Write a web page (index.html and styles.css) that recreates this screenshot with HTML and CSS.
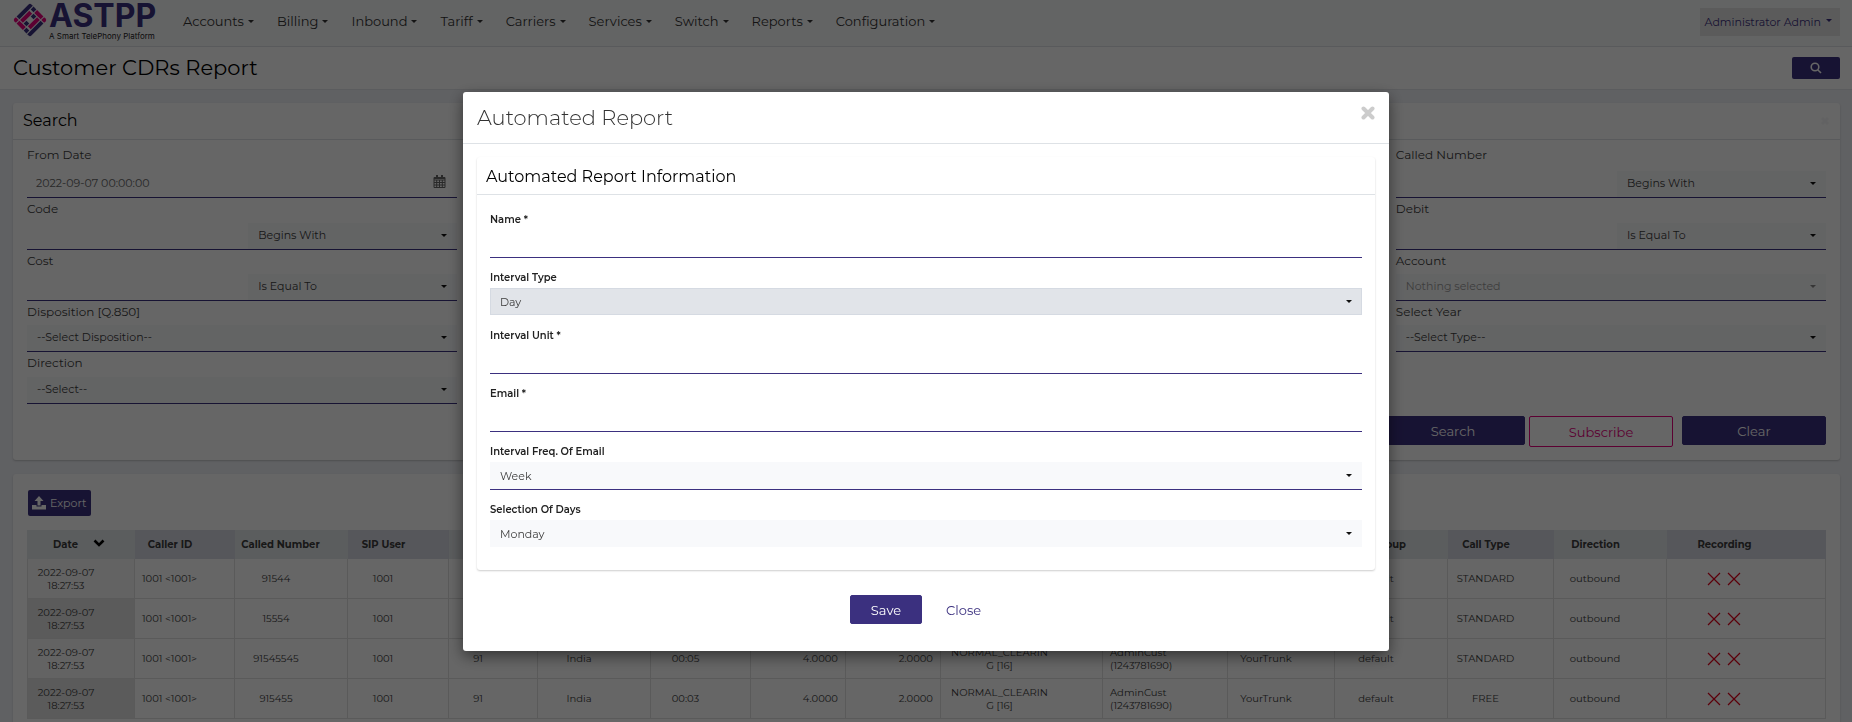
FILE: index.html
```html
<!DOCTYPE html>
<html lang="en">
<head>
<meta charset="utf-8">
<meta name="viewport" content="width=device-width, initial-scale=1">
<title>Customer CDRs Report</title>
<link rel="stylesheet" href="styles.css">
</head>
<body>
<div class="page">
  <header class="navbar">
    <a class="brand" href="#" aria-label="ASTPP">
      <svg class="brand-mark" viewBox="-17 -17 34 34" aria-hidden="true">
        <g transform="rotate(45)">
          <path class="navy" d="M-12-10a2 2 0 0 1 2-2h2v19h-4zM12 10a2 2 0 0 1-2 2h-2v-19h4z"/>
          <path class="pink" d="M-7-6h4v13h-4zM7 6h-4v-13h4z"/>
          <path class="navy" d="M-7-12h4v4h-4zM7 12h-4v-4h4z"/>
          <path class="pink" d="M-2-12h9v4h-9zM2 12h-9v-4h9z"/>
          <path class="pink" d="M-12 8h4v4h-2a2 2 0 0 1-2-2z"/>
          <path class="pink" d="M12-8h-4v-4h2a2 2 0 0 1 2 2z"/>
          <path class="navy" d="M-2-7h4v4h-4zM2 7h-4v-4h4z"/>
        </g>
      </svg>
      <span class="brand-text">
        <span class="brand-name">ASTPP</span>
        <span class="brand-tag">A Smart TelePhony Platform</span>
      </span>
    </a>
    <nav class="menu">
      <a href="#">Accounts</a>
      <a href="#">Billing</a>
      <a href="#">Inbound</a>
      <a href="#">Tariff</a>
      <a href="#">Carriers</a>
      <a href="#">Services</a>
      <a href="#">Switch</a>
      <a href="#">Reports</a>
      <a href="#">Configuration</a>
    </nav>
    <button class="user" type="button">Administrator Admin</button>
  </header>

  <div class="titlebar">
    <h1>Customer CDRs Report</h1>
    <button class="search-toggle" type="button" aria-label="Search">
      <svg width="12" height="12" viewBox="0 0 12 12" aria-hidden="true"><circle cx="5" cy="5" r="3.8"/><path d="M7.7 7.7 11 11"/></svg>
    </button>
  </div>

  <main class="content">
    <section class="card">
      <div class="card-head">
        <h2>Search</h2>
        <span class="card-close" aria-hidden="true">
          <svg width="10" height="10" viewBox="0 0 10 10"><path d="M2 2l6 6M8 2l-6 6"/></svg>
        </span>
      </div>
      <form class="filters">
        <div class="field r1 left">
          <label for="from">From Date</label>
          <div class="control">
            <input id="from" type="text" value="2022-09-07 00:00:00">
            <span class="date-icon">
              <svg width="13" height="13" viewBox="0 0 13 13" aria-hidden="true"><path d="M1 2.5h11v10H1zM1 5h11M1 7.5h11M1 10h11M3.7 5v7.5M6.5 5v7.5M9.3 5v7.5"/><path class="fill" d="M1 2h11v2H1zM3 0h2v3H3zM8 0h2v3H8z"/></svg>
            </span>
          </div>
        </div>
        <div class="field r2 left">
          <label for="code">Code</label>
          <div class="control">
            <input id="code" type="text">
            <span class="select half"><select aria-label="Code match"><option>Begins With</option></select></span>
          </div>
        </div>
        <div class="field r3 left">
          <label for="cost">Cost</label>
          <div class="control">
            <input id="cost" type="text">
            <span class="select half"><select aria-label="Cost match"><option>Is Equal To</option></select></span>
          </div>
        </div>
        <div class="field r4 left">
          <label for="disp">Disposition [Q.850]</label>
          <div class="control"><span class="select"><select id="disp"><option>--Select Disposition--</option></select></span></div>
        </div>
        <div class="field r5 left">
          <label for="dir">Direction</label>
          <div class="control"><span class="select"><select id="dir"><option>--Select--</option></select></span></div>
        </div>
        <div class="field r1 right">
          <label for="called">Called Number</label>
          <div class="control">
            <input id="called" type="text">
            <span class="select half"><select aria-label="Called Number match"><option>Begins With</option></select></span>
          </div>
        </div>
        <div class="field r2 right">
          <label for="debit">Debit</label>
          <div class="control">
            <input id="debit" type="text">
            <span class="select half"><select aria-label="Debit match"><option>Is Equal To</option></select></span>
          </div>
        </div>
        <div class="field r3 right">
          <label for="account">Account</label>
          <div class="control"><span class="select muted"><select id="account"><option>Nothing selected</option></select></span></div>
        </div>
        <div class="field r4 right">
          <label for="year">Select Year</label>
          <div class="control"><span class="select"><select id="year"><option>--Select Type--</option></select></span></div>
        </div>
        <div class="actions">
          <button class="btn wide search" type="button">Search</button>
          <button class="btn wide outline" type="button">Subscribe</button>
          <button class="btn wide" type="button">Clear</button>
        </div>
      </form>
    </section>

    <section class="card results">
      <button class="export" type="button">
        <svg width="14" height="14" viewBox="0 0 14 14" aria-hidden="true"><path d="M7 0l4.500 5H8.500v4.500h-3V5H2.500zM0 9h4.500v1.500h5V9H14v4.500H0z"/></svg>
        Export
      </button>
      <table class="cdrs">
        <colgroup>
          <col class="w108"><col class="w100"><col class="w113"><col class="w101"><col class="w89"><col class="w113"><col class="w100"><col class="w95"><col class="w95"><col class="w162"><col class="w125"><col class="w107"><col class="w113"><col class="w106"><col class="w113"><col>
        </colgroup>
        <thead>
          <tr>
            <th class="sorted">Date <svg width="12" height="8" viewBox="0 0 12 8" aria-hidden="true"><path d="M1.500 1.500 6 6l4.500-4.500"/></svg></th>
            <th>Caller ID</th><th class="near">Called Number</th><th>SIP User</th><th></th><th></th><th></th><th></th><th></th><th></th><th></th><th></th>
            <th>Rate Group</th><th>Call Type</th><th>Direction</th><th class="far">Recording</th>
          </tr>
        </thead>
        <tbody>
          <tr>
            <td>2022-09-07<br>18:27:53</td><td>1001 &lt;1001&gt;</td><td>91544</td><td>1001</td><td></td><td></td><td></td><td></td><td></td><td></td><td></td><td></td>
            <td>default</td><td>STANDARD</td><td>outbound</td>
            <td class="far"><svg class="cross" viewBox="0 0 34 14" role="img" aria-label="Not recorded"><path d="M1 1l12 12M13 1 1 13M21 1l12 12M33 1 21 13"/></svg></td>
          </tr>
          <tr>
            <td>2022-09-07<br>18:27:53</td><td>1001 &lt;1001&gt;</td><td>15554</td><td>1001</td><td></td><td></td><td></td><td></td><td></td><td></td><td></td><td></td>
            <td>default</td><td>STANDARD</td><td>outbound</td>
            <td class="far"><svg class="cross" viewBox="0 0 34 14" role="img" aria-label="Not recorded"><path d="M1 1l12 12M13 1 1 13M21 1l12 12M33 1 21 13"/></svg></td>
          </tr>
          <tr>
            <td>2022-09-07<br>18:27:53</td><td>1001 &lt;1001&gt;</td><td>91545545</td><td>1001</td><td>91</td><td>India</td><td>00:05</td><td class="num">4.0000</td><td class="num">2.0000</td><td class="far">NORMAL_CLEARIN<br>G [16]</td><td class="start">AdminCust<br>(1243781690)</td><td>YourTrunk</td>
            <td>default</td><td>STANDARD</td><td>outbound</td>
            <td class="far"><svg class="cross" viewBox="0 0 34 14" role="img" aria-label="Not recorded"><path d="M1 1l12 12M13 1 1 13M21 1l12 12M33 1 21 13"/></svg></td>
          </tr>
          <tr>
            <td>2022-09-07<br>18:27:53</td><td>1001 &lt;1001&gt;</td><td>915455</td><td>1001</td><td>91</td><td>India</td><td>00:03</td><td class="num">4.0000</td><td class="num">2.0000</td><td class="far">NORMAL_CLEARIN<br>G [16]</td><td class="start">AdminCust<br>(1243781690)</td><td>YourTrunk</td>
            <td>default</td><td>FREE</td><td>outbound</td>
            <td class="far"><svg class="cross" viewBox="0 0 34 14" role="img" aria-label="Not recorded"><path d="M1 1l12 12M13 1 1 13M21 1l12 12M33 1 21 13"/></svg></td>
          </tr>
        </tbody>
      </table>
    </section>
  </main>
</div>

<div class="backdrop">
  <div class="modal" role="dialog" aria-modal="true" aria-labelledby="modal-title">
    <div class="modal-head">
      <h2 id="modal-title">Automated Report</h2>
      <button class="modal-close" type="button" aria-label="Close dialog">
        <svg width="14" height="14" viewBox="0 0 14 14" aria-hidden="true"><path d="M2.500 2.500l9 9M11.500 2.500l-9 9"/></svg>
      </button>
    </div>
    <form class="modal-body">
      <section class="panel">
        <h3>Automated Report Information</h3>
        <div class="panel-fields">
          <div class="group"><label for="name">Name *</label><input id="name" type="text"></div>
          <div class="group"><label for="itype">Interval Type</label><span class="select disabled"><select id="itype"><option>Day</option></select></span></div>
          <div class="group"><label for="unit">Interval Unit *</label><input id="unit" type="text"></div>
          <div class="group"><label for="email">Email *</label><input id="email" type="text"></div>
          <div class="group"><label for="freq">Interval Freq. Of Email</label><span class="select lined"><select id="freq"><option>Week</option></select></span></div>
          <div class="group"><label for="days">Selection Of Days</label><span class="select"><select id="days"><option>Monday</option></select></span></div>
        </div>
      </section>
      <div class="modal-actions">
        <button class="btn" type="button">Save</button>
        <button class="btn link" type="button">Close</button>
      </div>
    </form>
  </div>
</div>
</body>
</html>
```

FILE: styles.css
```css
:root {
  --navy: #3b307f;
  --pink: #e6007e;
  --line: #dee2e6;
  --soft: #f8f9fb;
  --text: #3c3c3c;
}

* { box-sizing: border-box; }

body {
  margin: 0;
  height: 100vh;
  overflow: hidden;
  background: #f0f2f7;
  color: var(--text);
  font-family: Montserrat, Inter, "Open Sans", sans-serif;
  font-size: 11px;
}

h1, h2, h3 { margin: 0; font-weight: 400; color: #000; }
button, input, select { font: inherit; color: inherit; }
button { cursor: pointer; }
svg { display: block; }
path, circle { fill: none; }

/* Navigation */
.navbar {
  display: flex;
  align-items: flex-start;
  height: 47px;
  padding: 0 12px 0 13px;
  background: #f8f9fa;
  border-bottom: 1px solid var(--line);
}

.brand {
  display: flex;
  gap: 2px;
  width: 170px;
  color: var(--navy);
  text-decoration: none;
}
.brand-mark { width: 34px; height: 34px; margin-top: 3px; }
.brand-mark .navy { fill: var(--navy); }
.brand-mark .pink { fill: var(--pink); }
.brand-text { display: flex; flex-direction: column; white-space: nowrap; }
.brand-name { font: 700 32px/31px Inter, sans-serif; }
.brand-tag { font: 400 8px/10px Inter, sans-serif; color: #222; }

.menu { display: flex; gap: 23px; flex: 1; padding-top: 11px; }
.menu a {
  font-size: 13px;
  line-height: 20px;
  color: #333;
  text-decoration: none;
}
.menu a::after, .user::after, .select::after {
  content: "";
  display: inline-block;
  border: 3px solid transparent;
  border-top-color: currentColor;
  border-bottom: 0;
}
.menu a::after { margin-left: 4px; vertical-align: 3px; }

.user {
  height: 28px;
  margin-top: 8px;
  padding: 0 8px 0 5px;
  border: 0;
  background: #e4e4e4;
  color: var(--navy);
  white-space: nowrap;
}
.user::after { margin-left: 5px; vertical-align: 4px; }

.titlebar {
  display: flex;
  align-items: center;
  justify-content: space-between;
  height: 43px;
  padding: 0 12px 0 13px;
  background: #fff;
  border-bottom: 1px solid #e4e6ea;
}
.titlebar h1 { font-size: 21px; line-height: 28px; }
.search-toggle {
  display: grid;
  place-items: center;
  width: 48px;
  height: 22px;
  border: 0;
  border-radius: 2px;
  background: var(--navy);
}
.search-toggle path, .search-toggle circle { stroke: #fff; stroke-width: 1.6; }

/* Cards */
.content {
  display: flex;
  flex-direction: column;
  gap: 14px;
  padding: 13px 12px 0 13px;
}
.card {
  background: #fff;
  border-radius: 3px;
  box-shadow: 0 1px 2px rgba(0, 0, 0, .2);
}
.card-head {
  display: flex;
  align-items: center;
  justify-content: space-between;
  height: 37px;
  padding: 0 10px;
  border-bottom: 1px solid var(--line);
}
.card-head h2 { font-size: 16px; line-height: 24px; }
.card-close path { stroke: #f6f6f7; stroke-width: 3; }

.filters {
  display: grid;
  grid-template-columns: repeat(4, 1fr);
  grid-template-rows: 54px 52px 51px 51px 52px auto;
  column-gap: 26px;
  padding: 4px 14px 13px;
}
.field { display: flex; flex-direction: column; justify-content: space-between; }
.field label { font-size: 12px; line-height: 22px; }
.left { grid-column: 1; }
.right { grid-column: 4; }
.r1 { grid-row: 1; }
.r2 { grid-row: 2; }
.r3 { grid-row: 3; }
.r4 { grid-row: 4; }
.r5 { grid-row: 5; }

.control { display: flex; height: 27px; border-bottom: 1px solid var(--navy); }
.control input {
  flex: 1;
  min-width: 0;
  padding: 0 9px 2px;
  border: 0;
  background: transparent;
  color: #666;
}
.date-icon { padding: 4px 11px 0 0; }
.date-icon path { stroke: #666; stroke-width: 1; }
.date-icon .fill { fill: #666; stroke: none; }

.select {
  position: relative;
  display: block;
  flex: 1;
  background: var(--soft);
}
.select.half { flex: 0 0 209px; }
.select select {
  display: block;
  width: 100%;
  height: 100%;
  padding: 0 28px 0 10px;
  border: 0;
  appearance: none;
  background: transparent;
}
.control .select select { padding-bottom: 2px; }
.select::after {
  position: absolute;
  top: 50%;
  right: 10px;
  margin-top: -2px;
  border-top-color: #111;
}
.select.muted { color: #999; }
.select.muted::after { border-top-color: #888; }

.actions {
  grid-column: 1 / -1;
  display: flex;
  justify-content: flex-end;
  align-items: flex-start;
  padding-top: 12px;
}
.btn {
  height: 29px;
  padding: 0 20px;
  border: 1px solid var(--navy);
  border-radius: 2px;
  background: var(--navy);
  color: #fff;
  font-size: 13px;
}
.btn.wide { width: 144px; }
.btn.search { margin-right: 4px; }
.btn.outline {
  height: 31px;
  margin-right: 9px;
  border-color: var(--pink);
  background: transparent;
  color: var(--pink);
}
.btn.link {
  border-color: transparent;
  background: transparent;
  color: var(--navy);
}

/* Results */
.results { padding: 16px 14px 24px; }
.export {
  display: flex;
  align-items: center;
  gap: 4px;
  height: 26px;
  margin: 0 0 14px 1px;
  padding: 0 5px 0 4px;
  border: 0;
  border-radius: 2px;
  background: var(--navy);
  color: #fff;
}
.export path { fill: #fff; }

.cdrs {
  width: 100%;
  table-layout: fixed;
  border-collapse: separate;
  border-spacing: 0;
  font-size: 10px;
  line-height: 13px;
  text-align: center;
}
.w89 { width: 89px; }
.w95 { width: 95px; }
.w100 { width: 100px; }
.w101 { width: 101px; }
.w106 { width: 106px; }
.w107 { width: 107px; }
.w108 { width: 108px; }
.w113 { width: 113px; }
.w125 { width: 125px; }
.w162 { width: 162px; }
.cdrs th, .cdrs td { padding: 0 30px 0 0; white-space: nowrap; }
.cdrs th {
  height: 29px;
  background: #e4e8eb;
  font-weight: 700;
}
.cdrs th:nth-child(even) { background: #d7dae3; }
.cdrs td {
  height: 40px;
  border-right: 1px solid #e0e0e0;
  border-bottom: 1px solid #e0e0e0;
}
.cdrs td:first-child { background: #f7f7f7; border-left: 1px solid #e0e0e0; }
.cdrs tr:nth-child(even) td:first-child { background: #e4e4e4; }
.cdrs th.sorted { padding-right: 4px; }
.cdrs th.near { padding-right: 22px; }
.sorted svg { display: inline-block; margin-left: 12px; vertical-align: 1px; }
.sorted path { stroke: #000; stroke-width: 2.6; }
.cdrs .far { padding-right: 44px; }
.cdrs .num { padding-right: 7px; text-align: right; }
.cdrs .start { padding: 0 0 0 7px; text-align: left; }
.cross { width: 34px; height: 14px; margin: 0 auto; }
.cross path { stroke: #e3001b; stroke-width: 1.2; }

/* Dialog */
.backdrop {
  position: fixed;
  inset: 0;
  display: flex;
  align-items: flex-start;
  justify-content: center;
  padding-top: 92px;
  background: rgba(0, 0, 0, .6);
}
.modal {
  width: 50%;
  padding-bottom: 27px;
  border-radius: 3px;
  background: #fff;
  box-shadow: 0 5px 15px rgba(0, 0, 0, .5);
}
.modal-head {
  display: flex;
  justify-content: space-between;
  height: 52px;
  padding: 12px 14px 0;
  border-bottom: 1px solid var(--line);
}
.modal-head h2 { font-size: 21px; line-height: 28px; font-weight: 300; color: #333; }
.modal-close { width: 14px; height: 18px; padding: 0; border: 0; background: none; }
.modal-close path { stroke: #ccc; stroke-width: 4; stroke-linecap: round; }
.modal-body { padding: 13px 14px 0; }
.panel { border-radius: 3px; box-shadow: 0 1px 2px rgba(0, 0, 0, .2); }
.panel h3 {
  padding: 8px 9px 5px;
  border-bottom: 1px solid var(--line);
  font-size: 16px;
  line-height: 24px;
}
.panel-fields {
  display: flex;
  flex-direction: column;
  gap: 11px;
  padding: 16px 13px 22px;
}
.group { display: flex; flex-direction: column; min-height: 47px; }
.group label {
  margin-bottom: 1px;
  font-size: 10px;
  line-height: 18px;
  font-weight: 600;
  color: #222;
}
.group input {
  height: 28px;
  padding: 0 10px;
  border: 0;
  border-bottom: 1px solid var(--navy);
}
.group .select { flex: none; height: 27px; }
.group .disabled { border: 1px solid #d5dae2; background: #e1e4e9; }
.group .disabled select { padding-left: 9px; }
.group .disabled::after { right: 9px; }
.group .lined { height: 28px; border-bottom: 1px solid var(--navy); }
.modal-actions {
  display: flex;
  justify-content: center;
  gap: 3px;
  padding-top: 25px;
}
```
